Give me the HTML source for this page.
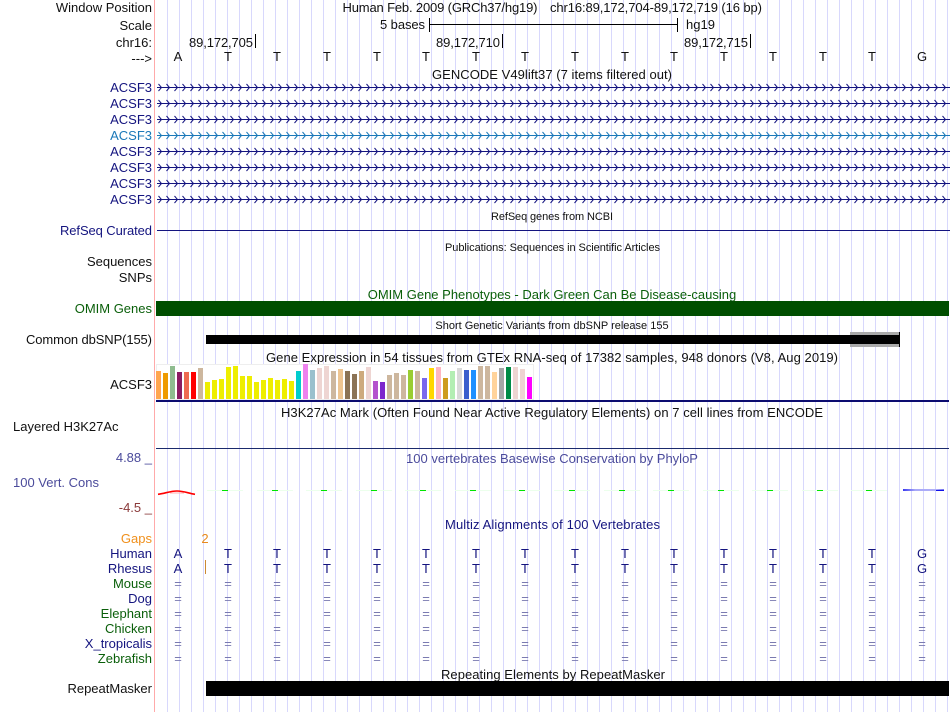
<!DOCTYPE html>
<html><head><meta charset="utf-8"><style>
html,body{margin:0;padding:0;background:#fff;width:950px;height:712px;overflow:hidden}
svg{display:block}
text{font-family:"Liberation Sans",sans-serif;font-size:13px}
.r{text-anchor:end}.m{text-anchor:middle}
.n{fill:#14147f}.g{fill:#0a5f0a}.k{fill:#111}
.s{font-size:11px}
</style></head><body>
<svg width="950" height="712" viewBox="0 0 950 712" xmlns="http://www.w3.org/2000/svg">
<defs>
<pattern id="grid" x="167" y="0" width="12" height="712" patternUnits="userSpaceOnUse"><rect width="1" height="712" fill="#d8d8fc"/></pattern>
<pattern id="chev" x="158" y="83" width="8" height="16" patternUnits="userSpaceOnUse"><path d="M0.5 1L3.5 4.500L0.5 8" fill="none" stroke="#14147f" stroke-width="1"/></pattern>
<pattern id="chev2" x="158" y="131" width="8" height="16" patternUnits="userSpaceOnUse"><path d="M0.5 1L3.5 4.500L0.5 8" fill="none" stroke="#1a78b8" stroke-width="1"/></pattern>
<linearGradient id="bl" x1="0" x2="1" y1="0" y2="0"><stop offset="0" stop-color="#3a3af0"/><stop offset="0.3" stop-color="#a8a8f8"/><stop offset="0.8" stop-color="#b0b0f8"/><stop offset="1" stop-color="#7070f0"/></linearGradient>
</defs>
<rect x="156" width="794" height="712" fill="url(#grid)"/>
<rect x="154" width="1" height="712" fill="#ffaaaa"/>

<g class="k">
<text class="r" x="152" y="12">Window Position</text>
<text class="r" x="152" y="30">Scale</text>
<text class="r" x="152" y="47">chr16:</text>
<text class="r" x="152" y="63">---&gt;</text>
<text x="342.500" y="12" textLength="195" lengthAdjust="spacing">Human Feb. 2009 (GRCh37/hg19)</text>
<text x="550" y="12" textLength="212" lengthAdjust="spacing">chr16:89,172,704-89,172,719 (16 bp)</text>
<text x="380" y="29" textLength="45" lengthAdjust="spacing">5 bases</text>
<text x="686" y="29">hg19</text>
<text x="189" y="47" textLength="64" lengthAdjust="spacing">89,172,705</text>
<text x="436" y="47" textLength="64" lengthAdjust="spacing">89,172,710</text>
<text x="684" y="47" textLength="64" lengthAdjust="spacing">89,172,715</text>
<text class="m" x="178 228 277 327 377 426 476 525 575 625 674 724 773 823 872 922" y="61">ATTTTTTTTTTTTTTG</text>
<text x="432" y="79" textLength="240" lengthAdjust="spacing">GENCODE V49lift37 (7 items filtered out)</text>
</g>
<path d="M429.500 18V32M677.500 18V32M430 24.500H677M255.500 34V48M502.500 34V48M750.500 34V48" stroke="#000" fill="none"/>

<g class="n">
<text class="r" x="152" y="92">ACSF3</text>
<text class="r" x="152" y="108">ACSF3</text>
<text class="r" x="152" y="124">ACSF3</text>
<text class="r" x="152" y="156">ACSF3</text>
<text class="r" x="152" y="172">ACSF3</text>
<text class="r" x="152" y="188">ACSF3</text>
<text class="r" x="152" y="204">ACSF3</text>
<text x="60" y="235" textLength="92" lengthAdjust="spacing">RefSeq Curated</text>
</g>
<text class="r" x="152" y="140" fill="#1a78b8">ACSF3</text>

<g fill="#14147f">
<rect x="157" y="87" width="793" height="1"/><rect x="157" y="103" width="793" height="1"/><rect x="157" y="119" width="793" height="1"/><rect x="157" y="151" width="793" height="1"/><rect x="157" y="167" width="793" height="1"/><rect x="157" y="183" width="793" height="1"/><rect x="157" y="199" width="793" height="1"/>
<rect x="157" y="230" width="793" height="1"/>
</g>
<rect x="157" y="135" width="793" height="1" fill="#1a78b8"/>
<g fill="url(#chev)">
<rect x="158" y="83" width="792" height="9"/>
<rect x="158" y="99" width="792" height="9"/>
<rect x="158" y="115" width="792" height="9"/>
<rect x="158" y="147" width="792" height="9"/>
<rect x="158" y="163" width="792" height="9"/>
<rect x="158" y="179" width="792" height="9"/>
<rect x="158" y="195" width="792" height="9"/>
</g>
<rect x="158" y="131" width="792" height="9" fill="url(#chev2)"/>

<text class="s" fill="#111" x="491" y="220" textLength="122" lengthAdjust="spacing">RefSeq genes from NCBI</text>
<text class="s" fill="#111" x="445" y="251" textLength="215" lengthAdjust="spacing">Publications: Sequences in Scientific Articles</text>
<text class="r k" x="152" y="266">Sequences</text>
<text class="r k" x="152" y="282">SNPs</text>

<text class="m g" x="552" y="299">OMIM Gene Phenotypes - Dark Green Can Be Disease-causing</text>
<text class="r g" x="152" y="313">OMIM Genes</text>
<rect x="156" y="301" width="793" height="15" fill="#004e00"/>

<text class="m s" fill="#111" x="552" y="329">Short Genetic Variants from dbSNP release 155</text>
<text class="k" x="26" y="344" textLength="126" lengthAdjust="spacing">Common dbSNP(155)</text>
<rect x="850" y="332" width="50" height="15" fill="#aaa"/>
<rect x="206" y="335" width="694" height="9" fill="#000"/>
<rect x="899" y="332" width="1" height="15" fill="#000"/>

<text class="k" x="266" y="362" textLength="572" lengthAdjust="spacing">Gene Expression in 54 tissues from GTEx RNA-seq of 17382 samples, 948 donors (V8, Aug 2019)</text>
<text class="r k" x="152" y="389">ACSF3</text>
<rect x="156.500" y="364.500" width="377" height="35" fill="#fff" stroke="#eee"/>
<g>
<rect x="156" y="371" width="5" height="28" fill="#ffa54f"/><rect x="163" y="373" width="5" height="26" fill="#ee9a00"/><rect x="170" y="366" width="5" height="33" fill="#8fbc8f"/><rect x="177" y="372" width="5" height="27" fill="#8b1c62"/><rect x="184" y="372" width="5" height="27" fill="#ee6a50"/><rect x="191" y="372" width="5" height="27" fill="#ff0000"/><rect x="198" y="368" width="5" height="31" fill="#cdb79e"/>
<rect x="205" y="382" width="5" height="17" fill="#eeee00"/><rect x="212" y="380" width="5" height="19" fill="#eeee00"/><rect x="219" y="379" width="5" height="20" fill="#eeee00"/><rect x="226" y="367" width="5" height="32" fill="#eeee00"/><rect x="233" y="366" width="5" height="33" fill="#eeee00"/><rect x="240" y="376" width="5" height="23" fill="#eeee00"/><rect x="247" y="376" width="5" height="23" fill="#eeee00"/><rect x="254" y="382" width="5" height="17" fill="#eeee00"/><rect x="261" y="380" width="5" height="19" fill="#eeee00"/><rect x="268" y="378" width="5" height="21" fill="#eeee00"/><rect x="275" y="380" width="5" height="19" fill="#eeee00"/><rect x="282" y="379" width="5" height="20" fill="#eeee00"/><rect x="289" y="381" width="5" height="18" fill="#eeee00"/>
<rect x="296" y="371" width="5" height="28" fill="#00cdcd"/><rect x="303" y="364" width="5" height="35" fill="#ee82ee"/><rect x="310" y="370" width="5" height="29" fill="#9ac0cd"/><rect x="317" y="368" width="5" height="31" fill="#eed5d2"/><rect x="324" y="366" width="5" height="33" fill="#eed5d2"/><rect x="331" y="371" width="5" height="28" fill="#cdb79e"/><rect x="338" y="369" width="5" height="30" fill="#eec591"/><rect x="345" y="371" width="5" height="28" fill="#8b7355"/><rect x="352" y="374" width="5" height="25" fill="#8b7355"/><rect x="359" y="371" width="5" height="28" fill="#cdaa7d"/><rect x="366" y="367" width="5" height="32" fill="#eed5d2"/><rect x="373" y="381" width="5" height="18" fill="#b452cd"/><rect x="380" y="382" width="5" height="17" fill="#7d26cd"/><rect x="387" y="375" width="5" height="24" fill="#cdb79e"/><rect x="394" y="373" width="5" height="26" fill="#cdb79e"/><rect x="401" y="375" width="5" height="24" fill="#cdb79e"/><rect x="408" y="370" width="5" height="29" fill="#9acd32"/><rect x="415" y="371" width="5" height="28" fill="#cdb79e"/><rect x="422" y="378" width="5" height="21" fill="#7a67ee"/><rect x="429" y="368" width="5" height="31" fill="#ffd700"/><rect x="436" y="367" width="5" height="32" fill="#ffb6c1"/><rect x="443" y="378" width="5" height="21" fill="#cd9b1d"/><rect x="450" y="371" width="5" height="28" fill="#b3eeb3"/><rect x="457" y="368" width="5" height="31" fill="#d9d9d9"/><rect x="464" y="370" width="5" height="29" fill="#3a5fcd"/><rect x="471" y="370" width="5" height="29" fill="#1e90ff"/><rect x="478" y="366" width="5" height="33" fill="#cdb79e"/><rect x="485" y="366" width="5" height="33" fill="#cdb79e"/><rect x="492" y="372" width="5" height="27" fill="#ffd39b"/><rect x="499" y="368" width="5" height="31" fill="#a6a6a6"/><rect x="506" y="367" width="5" height="32" fill="#008b45"/><rect x="513" y="367" width="5" height="32" fill="#eed5d2"/><rect x="520" y="369" width="5" height="30" fill="#eed5d2"/><rect x="527" y="377" width="5" height="22" fill="#ff00ff"/>
</g>
<rect x="156" y="400" width="793" height="2" fill="#0c0c70"/>

<text class="k" x="281" y="417" textLength="542" lengthAdjust="spacing">H3K27Ac Mark (Often Found Near Active Regulatory Elements) on 7 cell lines from ENCODE</text>
<text class="k" x="13" y="431">Layered H3K27Ac</text>
<rect x="156" y="448" width="793" height="1" fill="#1a2a6c"/>

<text class="m" fill="#4b4b9b" x="552" y="463">100 vertebrates Basewise Conservation by PhyloP</text>
<text class="r" fill="#4b4b9b" x="152" y="462">4.88 _</text>
<text fill="#4b4b9b" x="13" y="487">100 Vert. Cons</text>
<text class="r" fill="#8b3a3a" x="152" y="512">-4.5 _</text>

<path d="M158 494.300C165 493.500 170 491 177 491C184 491 189 493.500 195 494.300" fill="none" stroke="#f00" stroke-width="1.600"/>
<path d="M170 493H184" stroke="#ffb0b0" stroke-width="1" fill="none"/>
<g fill="#ecffec">
<rect x="207" y="490" width="36" height="1"/><rect x="257" y="490" width="36" height="1"/><rect x="306" y="490" width="36" height="1"/><rect x="356" y="490" width="36" height="1"/><rect x="405" y="490" width="36" height="1"/><rect x="455" y="490" width="36" height="1"/><rect x="504" y="490" width="36" height="1"/><rect x="554" y="490" width="36" height="1"/><rect x="604" y="490" width="36" height="1"/><rect x="653" y="490" width="36" height="1"/><rect x="703" y="490" width="36" height="1"/><rect x="752" y="490" width="36" height="1"/><rect x="802" y="490" width="36" height="1"/><rect x="851" y="490" width="36" height="1"/>
</g>
<g fill="#00e600">
<rect x="222" y="490" width="6" height="1"/><rect x="272" y="490" width="6" height="1"/><rect x="321" y="490" width="6" height="1"/><rect x="371" y="490" width="6" height="1"/><rect x="420" y="490" width="6" height="1"/><rect x="470" y="490" width="6" height="1"/><rect x="519" y="490" width="6" height="1"/><rect x="569" y="490" width="6" height="1"/><rect x="619" y="490" width="6" height="1"/><rect x="668" y="490" width="6" height="1"/><rect x="718" y="490" width="6" height="1"/><rect x="767" y="490" width="6" height="1"/><rect x="817" y="490" width="6" height="1"/><rect x="866" y="490" width="6" height="1"/>
</g>
<rect x="903" y="489" width="41" height="2" fill="url(#bl)"/>
<rect x="936" y="490" width="8" height="1" fill="#1010e8"/>

<text class="n" x="445" y="529" textLength="215" lengthAdjust="spacing">Multiz Alignments of 100 Vertebrates</text>
<text class="r" fill="#f0901c" x="152" y="543">Gaps</text>
<text class="m" fill="#e88a1c" x="205" y="543">2</text>
<rect x="205" y="560" width="1" height="14" fill="#cc8a33"/>
<g class="n">
<text class="r" x="152" y="558">Human</text>
<text class="r" x="152" y="573">Rhesus</text>
<text class="r" x="152" y="603">Dog</text>
<text class="r" x="152" y="648">X_tropicalis</text>
<text class="m" x="178 228 277 327 377 426 476 525 575 625 674 724 773 823 872 922" y="558">ATTTTTTTTTTTTTTG</text>
<text class="m" x="178 228 277 327 377 426 476 525 575 625 674 724 773 823 872 922" y="573">ATTTTTTTTTTTTTTG</text>
</g>
<g class="g">
<text class="r" x="152" y="588">Mouse</text>
<text class="r" x="152" y="618">Elephant</text>
<text class="r" x="152" y="633">Chicken</text>
<text class="r" x="152" y="663">Zebrafish</text>
</g>
<g fill="#7a7ab0" text-anchor="middle">
<text x="178 228 277 327 377 426 476 525 575 625 674 724 773 823 872 922" y="588">================</text>
<text x="178 228 277 327 377 426 476 525 575 625 674 724 773 823 872 922" y="603">================</text>
<text x="178 228 277 327 377 426 476 525 575 625 674 724 773 823 872 922" y="618">================</text>
<text x="178 228 277 327 377 426 476 525 575 625 674 724 773 823 872 922" y="633">================</text>
<text x="178 228 277 327 377 426 476 525 575 625 674 724 773 823 872 922" y="648">================</text>
<text x="178 228 277 327 377 426 476 525 575 625 674 724 773 823 872 922" y="663">================</text>
</g>

<text class="k" x="441" y="679" textLength="224" lengthAdjust="spacing">Repeating Elements by RepeatMasker</text>
<text class="r k" x="152" y="693">RepeatMasker</text>
<rect x="206" y="681" width="743" height="15" fill="#000"/>
</svg>
</body></html>
